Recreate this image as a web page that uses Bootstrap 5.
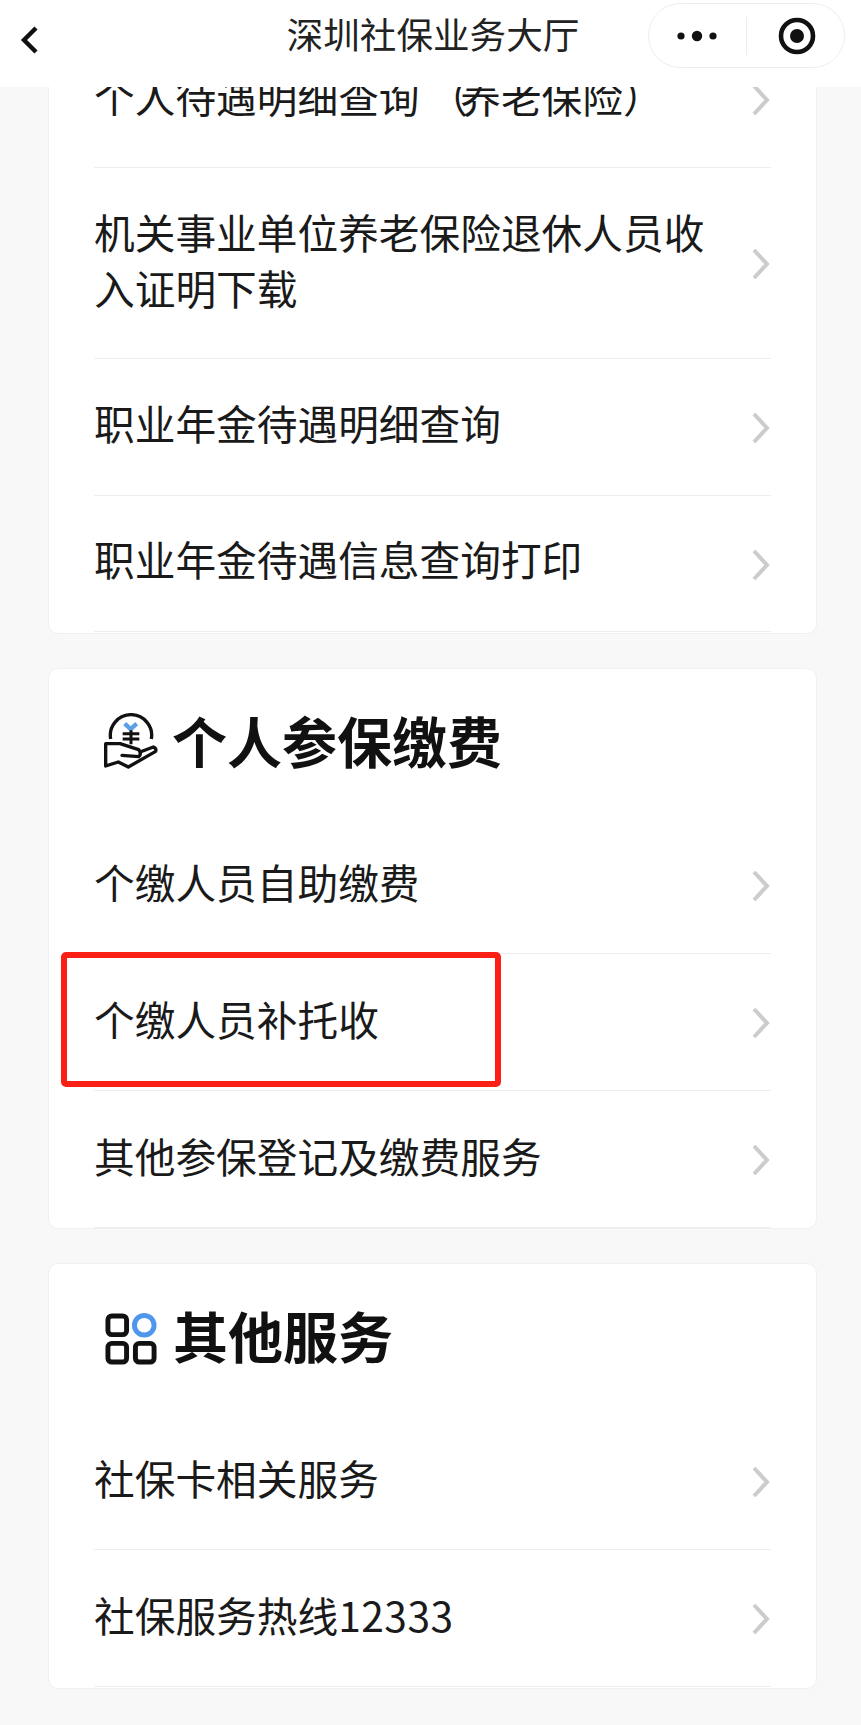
<!DOCTYPE html>
<html lang="zh-CN">
<head>
<meta charset="utf-8">
<title>深圳社保业务大厅</title>
<link href="https://cdn.jsdelivr.net/npm/bootstrap@5.3.0/dist/css/bootstrap.min.css" rel="stylesheet">
<style>
html,body{height:100%}
body{background:#f8f8f8;font-family:"Noto Sans CJK SC","Liberation Sans",sans-serif;color:#1a1a1a;overflow:hidden}
.app-frame{height:1725px}
.top-bar{height:87px;background:#fff;display:grid;grid-template-columns:1fr auto 1fr;align-items:center;flex:none}
.back-btn{padding-left:20px;margin-top:-8px;display:flex}
.bar-title{font-size:36.6px;line-height:1;color:#222;margin-top:-19px;padding-left:5px}
.capsule{justify-self:end;margin:-16px 16px 0 0;width:197px;height:65px;border:1.5px solid #eee;border-radius:33px;background:#fff;display:flex;align-items:center}
.cap-part{width:98px;display:flex;justify-content:center}
.cap-part.target{padding-left:4px}
.cap-sep{width:1px;height:38px;background:#eee}
.scroller{overflow:hidden;flex:1 1 auto;padding:0 44px 0 48px}
.scroller-inner{margin-top:-57px}
.panel{border:1px solid #f0f0f0;border-radius:10px;background:#fff;margin-bottom:34px;--bs-card-border-color:#f0f0f0;padding-bottom:1px}
.panel.tight{padding-bottom:0}
.svc-row{margin:0 45px;height:137px;border-bottom:1.5px solid #eee;display:flex;align-items:center;justify-content:space-between;font-size:40.7px;line-height:56px;color:#1a1a1a;position:relative}
.svc-row.tall{height:191px}
.svc-row.short{height:136px}
.svc-label{max-width:625px;margin-top:-6px}
.svc-label.raised{margin-top:-9px}
.paren-open{margin-left:8px;margin-right:-8px}
.digits{letter-spacing:.5px}
.chev{margin-top:2px;flex:none}
.panel-head{height:148px;display:flex;align-items:center;padding-left:55px;padding-bottom:8px;gap:13px;font-size:55px;font-weight:700;color:#111;line-height:1}
.panel-head.head-lg{height:149px}
.panel-head svg{flex:none;margin-top:4px}
.panel-head svg.grid-ico{margin:8px 2px 0 0}
.hl-box{position:absolute;left:-33px;top:-2px;width:440px;height:135px;border:6px solid #fa2016;border-radius:5px;pointer-events:none}
</style>
</head>
<body>
<div class="app-frame d-flex flex-column">
  <header class="top-bar">
    <div class="back-btn">
      <svg width="20" height="28" viewBox="0 0 20 28"><path d="M16 2 L4 14 L16 26" fill="none" stroke="#111" stroke-width="4.4"/></svg>
    </div>
    <div class="bar-title">深圳社保业务大厅</div>
    <div class="capsule">
      <div class="cap-part">
        <svg width="40" height="14" viewBox="0 0 40 14"><circle cx="4" cy="7" r="3.6" fill="#111"/><circle cx="20" cy="7" r="5.2" fill="#111"/><circle cx="36" cy="7" r="3.6" fill="#111"/></svg>
      </div>
      <div class="cap-sep"></div>
      <div class="cap-part target">
        <svg width="38" height="38" viewBox="0 0 38 38"><circle cx="19" cy="19" r="16" fill="none" stroke="#111" stroke-width="4.6"/><circle cx="19" cy="19" r="7" fill="#111"/></svg>
      </div>
    </div>
  </header>
  <main class="scroller">
    <div class="scroller-inner">
      <section class="card panel">
        <div class="svc-row"><span class="svc-label">个人待遇明细查询<span class="paren-open">（</span>养老保险）</span><svg class="chev" width="20" height="32" viewBox="0 0 20 32"><path d="M3 2 L16 16 L3 30" fill="none" stroke="#ccc" stroke-width="4"/></svg></div>
        <div class="svc-row tall"><span class="svc-label">机关事业单位养老保险退休人员收入证明下载</span><svg class="chev" width="20" height="32" viewBox="0 0 20 32"><path d="M3 2 L16 16 L3 30" fill="none" stroke="#ccc" stroke-width="4"/></svg></div>
        <div class="svc-row"><span class="svc-label raised">职业年金待遇明细查询</span><svg class="chev" width="20" height="32" viewBox="0 0 20 32"><path d="M3 2 L16 16 L3 30" fill="none" stroke="#ccc" stroke-width="4"/></svg></div>
        <div class="svc-row short"><span class="svc-label raised">职业年金待遇信息查询打印</span><svg class="chev" width="20" height="32" viewBox="0 0 20 32"><path d="M3 2 L16 16 L3 30" fill="none" stroke="#ccc" stroke-width="4"/></svg></div>
      </section>
      <section class="card panel tight">
        <div class="panel-head">
          <svg width="55" height="57" viewBox="0 0 165 171"><path d="M20 78 A62 62 0 1 1 142 78" fill="none" stroke="#111" stroke-width="10"/><path d="M62 32 L80 48 L98 32" fill="none" stroke="#5b9ee8" stroke-width="13"/><path d="M56 62 H106 M56 78 H106 M81 52 V94" fill="none" stroke="#111" stroke-width="9"/><path d="M108 117 L148 102 Q158 106 155 115 L73 162 L43 147 L5 159 V92 H48 L104 110 Q114 122 104 131 L54 127" fill="none" stroke="#111" stroke-width="10" stroke-linejoin="round" stroke-linecap="round"/></svg>
          个人参保缴费
        </div>
        <div class="svc-row"><span class="svc-label">个缴人员自助缴费</span><svg class="chev" width="20" height="32" viewBox="0 0 20 32"><path d="M3 2 L16 16 L3 30" fill="none" stroke="#ccc" stroke-width="4"/></svg></div>
        <div class="svc-row"><span class="svc-label">个缴人员补托收</span><svg class="chev" width="20" height="32" viewBox="0 0 20 32"><path d="M3 2 L16 16 L3 30" fill="none" stroke="#ccc" stroke-width="4"/></svg><div class="hl-box"></div></div>
        <div class="svc-row"><span class="svc-label">其他参保登记及缴费服务</span><svg class="chev" width="20" height="32" viewBox="0 0 20 32"><path d="M3 2 L16 16 L3 30" fill="none" stroke="#ccc" stroke-width="4"/></svg></div>
      </section>
      <section class="card panel">
        <div class="panel-head head-lg">
          <svg class="grid-ico" width="54" height="54" viewBox="0 0 55 55"><rect x="4" y="4" width="19" height="19" rx="4" fill="none" stroke="#111" stroke-width="5"/><circle cx="41" cy="13.500" r="10" fill="none" stroke="#4f97ec" stroke-width="5"/><rect x="4" y="32" width="19" height="19" rx="4" fill="none" stroke="#111" stroke-width="5"/><rect x="32" y="32" width="19" height="19" rx="4" fill="none" stroke="#111" stroke-width="5"/></svg>
          其他服务
        </div>
        <div class="svc-row"><span class="svc-label">社保卡相关服务</span><svg class="chev" width="20" height="32" viewBox="0 0 20 32"><path d="M3 2 L16 16 L3 30" fill="none" stroke="#ccc" stroke-width="4"/></svg></div>
        <div class="svc-row"><span class="svc-label">社保服务热线<span class="digits">12333</span></span><svg class="chev" width="20" height="32" viewBox="0 0 20 32"><path d="M3 2 L16 16 L3 30" fill="none" stroke="#ccc" stroke-width="4"/></svg></div>
      </section>
    </div>
  </main>
</div>
<script src="https://cdn.jsdelivr.net/npm/bootstrap@5.3.0/dist/js/bootstrap.bundle.min.js"></script>
</body>
</html>
